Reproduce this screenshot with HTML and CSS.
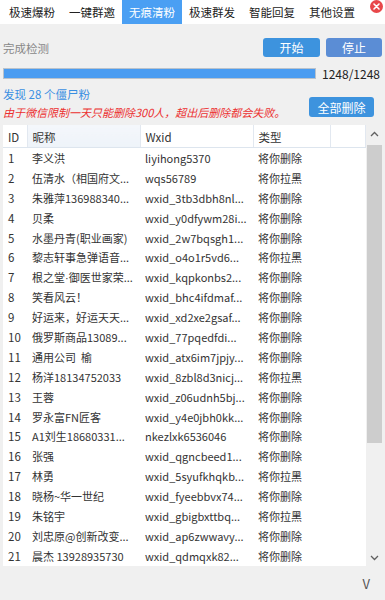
FILE: index.html
```html
<!DOCTYPE html>
<html lang="zh-CN">
  <head>
    <meta charset="UTF-8">
    <meta name="viewport" content="width=device-width, initial-scale=1.0">
    <title>无痕清粉</title>
    <link rel="stylesheet" href="styles.css">
  </head>
  <body>
    <div class="tabs">
      <div class="tab">极速爆粉</div>
      <div class="tab">一键群邀</div>
      <div class="tab active">无痕清粉</div>
      <div class="tab">极速群发</div>
      <div class="tab">智能回复</div>
      <div class="tab">其他设置</div>
      <div class="close">
        <svg width="13" height="13" viewBox="0 0 13 13">
          <circle cx="6.5" cy="6.5" r="6.5" fill="#e8474a"/>
          <path d="M4 4 L9 9 M9 4 L4 9" stroke="#fff" stroke-width="1.6" stroke-linecap="round"/>
        </svg>
      </div>
    </div>

    <div class="toolbar">
      <span class="status">完成检测</span>
      <button class="btn start">开始</button>
      <button class="btn stop">停止</button>
    </div>

    <div class="progress-row">
      <div class="progress"><div class="progress-fill" style="width:100%"></div></div>
      <span class="progress-text">1248/1248</span>
    </div>

    <div class="notice">
      <div class="notice-text">
        <div class="found">发现 28 个僵尸粉</div>
        <div class="warn">由于微信限制一天只能删除300人，超出后删除都会失败。</div>
      </div>
      <button class="btn delete-all">全部删除</button>
    </div>

    <div class="list">
      <div class="grid-wrap">
        <table class="grid">
          <colgroup>
            <col class="c-id"><col class="c-name"><col class="c-wxid"><col class="c-type"><col>
          </colgroup>
          <thead>
            <tr><th>ID</th><th class="sorted">昵称</th><th>Wxid</th><th>类型</th><th></th></tr>
          </thead>
          <tbody>
            <tr><td>1</td><td>李义洪</td><td>liyihong5370</td><td>将你删除</td><td></td></tr>
            <tr><td>2</td><td>伍清水（相国府文...</td><td>wqs56789</td><td>将你拉黑</td><td></td></tr>
            <tr><td>3</td><td>朱雅萍136988340...</td><td>wxid_3tb3dbh8nl...</td><td>将你删除</td><td></td></tr>
            <tr><td>4</td><td>贝柔</td><td>wxid_y0dfywm28i...</td><td>将你删除</td><td></td></tr>
            <tr><td>5</td><td>水墨丹青(职业画家)</td><td>wxid_2w7bqsgh1...</td><td>将你删除</td><td></td></tr>
            <tr><td>6</td><td>黎志轩事急弹语音...</td><td>wxid_o4o1r5vd6...</td><td>将你拉黑</td><td></td></tr>
            <tr><td>7</td><td>根之堂<span class="dot">·</span>御医世家荣...</td><td>wxid_kqpkonbs2...</td><td>将你删除</td><td></td></tr>
            <tr><td>8</td><td>笑看风云！</td><td>wxid_bhc4ifdmaf...</td><td>将你删除</td><td></td></tr>
            <tr><td>9</td><td>好运来，好运天天...</td><td>wxid_xd2xe2gsaf...</td><td>将你删除</td><td></td></tr>
            <tr><td>10</td><td>俄罗斯商品13089...</td><td>wxid_77pqedfdi...</td><td>将你删除</td><td></td></tr>
            <tr><td>11</td><td>通用公司&nbsp;&nbsp;榆</td><td>wxid_atx6im7jpjy...</td><td>将你删除</td><td></td></tr>
            <tr><td>12</td><td>杨洋18134752033</td><td>wxid_8zbl8d3nicj...</td><td>将你拉黑</td><td></td></tr>
            <tr><td>13</td><td>王蓉</td><td>wxid_z06udnh5bj...</td><td>将你删除</td><td></td></tr>
            <tr><td>14</td><td>罗永富FN匠客</td><td>wxid_y4e0jbh0kk...</td><td>将你删除</td><td></td></tr>
            <tr><td>15</td><td>A1刘生18680331...</td><td>nkezlxk6536046</td><td>将你删除</td><td></td></tr>
            <tr><td>16</td><td>张强</td><td>wxid_qgncbeed1...</td><td>将你删除</td><td></td></tr>
            <tr><td>17</td><td>林勇</td><td>wxid_5syufkhqkb...</td><td>将你拉黑</td><td></td></tr>
            <tr><td>18</td><td>晓杨~华一世纪</td><td>wxid_fyeebbvx74...</td><td>将你删除</td><td></td></tr>
            <tr><td>19</td><td>朱铭宇</td><td>wxid_gbigbxttbq...</td><td>将你拉黑</td><td></td></tr>
            <tr><td>20</td><td>刘忠原@创新改变...</td><td>wxid_ap6zwwavy...</td><td>将你删除</td><td></td></tr>
            <tr><td>21</td><td>晨杰 13928935730</td><td>wxid_qdmqxk82...</td><td>将你删除</td><td></td></tr>
          </tbody>
        </table>
      </div>
      <div class="scrollbar">
        <div class="arrow">
          <svg width="9" height="6" viewBox="0 0 9 6"><path d="M1 5 L4.5 1.5 L8 5" fill="none" stroke="#606060" stroke-width="1.3"/></svg>
        </div>
        <div class="track"><div class="thumb"></div></div>
        <div class="arrow">
          <svg width="9" height="6" viewBox="0 0 9 6"><path d="M1 1 L4.5 4.5 L8 1" fill="none" stroke="#606060" stroke-width="1.3"/></svg>
        </div>
      </div>
    </div>

    <div class="footer">V</div>
  </body>
</html>
```

FILE: styles.css
```css
body {
  margin: 0;
  padding: 0;
  width: 385px;
  height: 600px;
  overflow: hidden;
  background: #f0f0f0;
  font-family: "Noto Sans CJK SC", sans-serif;
  font-size: 11.5px;
  color: #333;
}

.tabs {
  display: flex;
  height: 24px;
  padding-left: 2px;
  background: #fff;
}

.tab {
  width: 60px;
  display: flex;
  align-items: center;
  justify-content: center;
  color: #222;
}

.tab.active {
  background: #4a9ff3;
  color: #fff;
}

.close {
  margin-left: auto;
  margin-right: 2px;
  line-height: 0;
}

.toolbar {
  display: flex;
  align-items: center;
  gap: 6px;
  padding: 14px 3px 0 3px;
}

.status {
  color: #888;
  margin-right: auto;
}

.btn {
  height: 19px;
  padding: 0;
  border: none;
  border-radius: 3px;
  color: #fff;
  font-family: inherit;
  font-size: 12px;
  line-height: 19px;
  cursor: pointer;
}

.start {
  width: 57px;
  background: #3d93de;
}

.stop {
  width: 56px;
  background: #5b8dd5;
}

.progress-row {
  display: flex;
  align-items: center;
  gap: 6px;
  padding: 11px 3px 0 3px;
}

.progress {
  width: 311px;
  height: 9px;
  border: 1px solid #b9c2cc;
  background: #e6e6e6;
}

.progress-fill {
  height: 100%;
  background: #4a9cf1;
}

.progress-text {
  color: #222;
  font-size: 12px;
  line-height: 11px;
}

.notice {
  display: flex;
  padding: 7px 11px 0 3px;
}

.notice-text {
  flex: 1;
}

.found {
  color: #3a8fe2;
  line-height: 17px;
}

.warn {
  color: #ec2f2f;
  font-style: italic;
  font-size: 11px;
  line-height: 18px;
}

.delete-all {
  align-self: flex-end;
  width: 65px;
  height: 20px;
  margin-bottom: 4px;
  background: #3d93de;
}

.list {
  display: flex;
  height: 441px;
  margin: 4px 2px 0 3px;
}

.grid-wrap {
  flex: 1;
  background: #fff;
  overflow: hidden;
}

.grid {
  width: 100%;
  table-layout: fixed;
  border-collapse: collapse;
}

.c-id { width: 24px; }
.c-name { width: 113px; }
.c-wxid { width: 113px; }
.c-type { width: 77px; }

.grid th {
  height: 21px;
  padding: 1px 0 0 5px;
  text-align: left;
  font-weight: normal;
  color: #333;
  border-right: 1px solid #e2e8f0;
  border-bottom: 1px solid #dde5ee;
}

.grid th.sorted {
  background: linear-gradient(to bottom, #f4f7fb, #eef3f9);
}

.grid td {
  height: 19.9px;
  padding: 0 0 0 5px;
  font-size: 11px;
  white-space: nowrap;
  overflow: hidden;
  color: #333;
}

.grid td:first-child {
  font-size: 11.5px;
}

.dot {
  font-family: "Liberation Sans", sans-serif;
}

.scrollbar {
  width: 17px;
  display: flex;
  flex-direction: column;
  background: #f0f0f0;
}

.arrow {
  height: 17px;
  display: flex;
  align-items: center;
  justify-content: center;
}

.track {
  flex: 1;
  padding: 3px 1px 0 1px;
}

.thumb {
  height: 298px;
  background: #cdcdcd;
}

.footer {
  height: 34px;
  display: flex;
  align-items: center;
  justify-content: flex-end;
  padding-right: 15px;
  color: #555;
  font-size: 13px;
}
```
